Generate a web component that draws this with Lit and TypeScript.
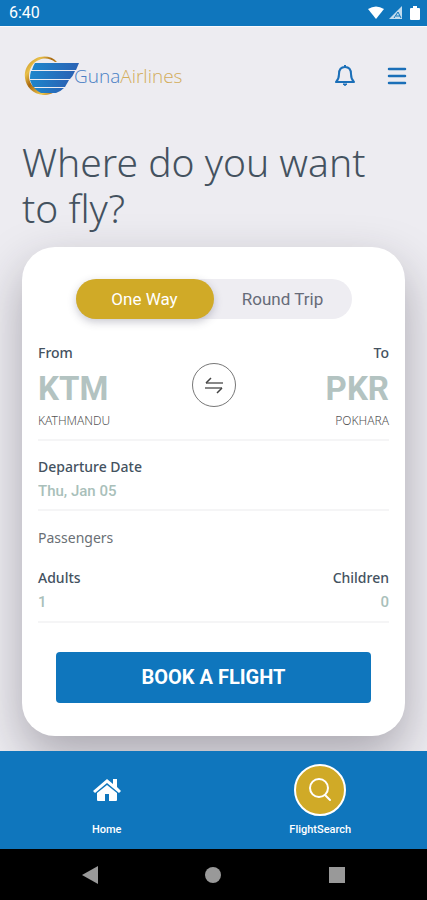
import { LitElement, html, css, svg } from "lit";
import { customElement, state } from "lit/decorators.js";
import { classMap } from "lit/directives/class-map.js";

@customElement("airline-logo")
class AirlineLogo extends LitElement {
  static styles = css`
    :host { display: flex; align-items: center; }
    .mark { width: 56px; height: 42px; flex: none; }
    .name {
      font: 300 19px/24px "Open Sans", sans-serif;
      color: #4a7fc4;
      margin-left: -6px;
    }
    .gold { color: #d3ad5b; }
  `;
  render() {
    return html`
      <svg class="mark" viewBox="0 0 56 42" aria-hidden="true">
        <defs>
          <linearGradient id="ring" x1="0" y1="0" x2="1" y2="1">
            <stop offset="0" stop-color="#b98318" />
            <stop offset=".25" stop-color="#e9c04a" />
            <stop offset=".45" stop-color="#a8680f" />
            <stop offset=".75" stop-color="#f0c84c" />
            <stop offset="1" stop-color="#8d4a12" />
          </linearGradient>
          <linearGradient id="wing" x1="0" y1="0" x2="1" y2="0">
            <stop offset="0" stop-color="#1d86cc" />
            <stop offset="1" stop-color="#2a62b4" />
          </linearGradient>
        </defs>
        <path d="M33 7C28 1 18 0 11 4C3 8 0 16 1 23C2 32 9 39 19 40C25 40 30 38 33 35L31 34C27 37 20 37 15 35C8 32 5 27 5 21C5 14 9 7 15 5C21 2 27 4 31 7Z" fill="url(#ring)" />
        <path d="M11 8H55L52 15H8Q9 11 11 8Z" fill="url(#wing)" />
        <path d="M7 16H51Q49 21 46 24H6Q6 19 7 16Z" fill="url(#wing)" />
        <path d="M6 25H45L41 32H9Q7 28 6 25Z" fill="url(#wing)" />
        <path d="M10 33H40Q36 37 32 38H17Q13 36 10 33Z" fill="url(#wing)" />
      </svg>
      <span class="name">Guna<span class="gold">Airlines</span></span>
    `;
  }
}

const wifi = svg`<path d="M0 3Q8-2 16 3L8 13Z" fill="#fff"/>`;
const signal = svg`<path d="M13 0V13H0Z" fill="#fff" opacity=".75"/><path d="M5 12L9 6L12 12M7 10H11" fill="none" stroke="#0f76bd"/>`;
const battery = svg`<path d="M3 0H7V2H9Q10 2 10 3V13Q10 14 9 14H1Q0 14 0 13V3Q0 2 1 2H3Z" fill="#fff"/>`;

@customElement("app-root")
class AppRoot extends LitElement {
  @state() private trip = "one";
  @state() private origin = { code: "KTM", city: "KATHMANDU" };
  @state() private target = { code: "PKR", city: "POKHARA" };

  static styles = css`
    :host {
      display: flex;
      flex-direction: column;
      min-height: 100vh;
      background: #edecf1;
      color: #44525f;
      font-family: Roboto, sans-serif;
    }
    * { box-sizing: border-box; }
    button, input { font: inherit; color: inherit; border: 0; padding: 0; margin: 0; background: none; }
    button { cursor: pointer; }
    svg { display: block; }

    .status {
      display: flex;
      align-items: center;
      gap: 5px;
      height: 27px;
      padding: 0 7px 0 9px;
      background: #0f76bd;
      border-bottom: 1px solid #fafafd;
      color: #fff;
      font-size: 16px;
      line-height: 28px;
    }
    .time { margin-right: auto; }

    .top {
      display: flex;
      align-items: center;
      gap: 32px;
      padding: 28px 20px 0 24px;
    }
    .top airline-logo { margin-right: auto; }

    main { flex: 1; display: flex; flex-direction: column; padding: 42px 22px 15px; overflow: hidden; }
    h1 {
      margin: 0 0 16px;
      font: 300 39px/46px "Noto Sans", sans-serif;
    }
    .card {
      flex: 1;
      padding: 32px 16px 33px;
      border-radius: 33px;
      background: #fff;
      box-shadow: 0 20px 48px rgba(40, 36, 50, .34);
    }
    .trips {
      display: flex;
      width: 276px;
      max-width: 100%;
      margin: 0 auto 24px;
      border-radius: 20px;
      background: #eeedf2;
    }
    .trip {
      flex: 1;
      border-radius: 20px;
      font-size: 17px;
      line-height: 40px;
      color: #666b78;
    }
    .trip.on { background: #d0aa27; color: #fff; box-shadow: 0 3px 8px rgba(60, 60, 90, .28); }

    .row { display: flex; justify-content: space-between; align-items: center; border-bottom: 2px solid #f5f5f6; }
    .end { text-align: right; }
    .route { padding-bottom: 12px; }
    .place { flex: 1; }
    .label {
      display: block;
      font: 500 14px/20px "Noto Sans", sans-serif;
      color: #44525f;
    }
    .code { display: block; font-weight: 700; font-size: 33px; line-height: 52px; color: #b3c3c1; }
    .city { display: block; font: 300 12px/12px "Noto Sans", sans-serif; color: #555; }
    .swap {
      flex: none;
      display: grid;
      place-items: center;
      width: 44px;
      height: 44px;
      border: 1px solid #777;
      border-radius: 50%;
    }
    .field { flex: 1; min-width: 0; }
    .value { display: block; width: 100%; height: 28px; font-weight: 500; font-size: 15px; line-height: 28px; color: #a9bfba; }
    .date { padding: 16px 0 4px; }
    .people { padding-bottom: 5px; }
    h2 { margin: 17px 0 20px; font: 400 14px/20px "Noto Sans", sans-serif; color: #6a6f75; }
    .book {
      display: block;
      width: calc(100% - 36px);
      margin: 29px auto 0;
      border-radius: 4px;
      background: #0f76bd;
      color: #fff;
      font-weight: 700;
      font-size: 20px;
      line-height: 51px;
    }

    .tabs { display: flex; height: 98px; background: #0f76bd; }
    .tab {
      flex: 1;
      display: flex;
      flex-direction: column;
      align-items: center;
      gap: 4px;
      padding-top: 13px;
      color: #fff;
      text-decoration: none;
      font-weight: 500;
      font-size: 11px;
      line-height: 20px;
    }
    .bubble { display: grid; place-items: center; width: 52px; height: 52px; border-radius: 50%; }
    .bubble.on { background: #d0aa27; border: 2px solid #fff; }
    .system { display: flex; justify-content: space-around; align-items: center; height: 51px; padding: 0 28px; background: #000; }
  `;

  private swap() {
    [this.origin, this.target] = [this.target, this.origin];
  }

  private tripButton(id: string, text: string) {
    return html`<button
      class=${classMap({ trip: true, on: this.trip === id })}
      aria-pressed=${this.trip === id ? "true" : "false"}
      @click=${() => (this.trip = id)}
    >${text}</button>`;
  }

  render() {
    return html`
      <div class="status">
        <span class="time">6:40</span>
        <svg width="16" height="14" viewBox="0 0 16 14">${wifi}</svg>
        <svg width="14" height="14" viewBox="0 0 14 14">${signal}</svg>
        <svg width="12" height="14" viewBox="-2 0 12 14">${battery}</svg>
      </div>
      <header class="top">
        <airline-logo></airline-logo>
        <button aria-label="Notifications">
          <svg width="20" height="22" viewBox="0 0 20 22" fill="none" stroke="#1b6fb8" stroke-width="2" stroke-linejoin="round">
            <path d="M10 0V2M10 2C6 2 4 5 4 9C4 13 3 15 1 17H19C17 15 16 13 16 9C16 5 14 2 10 2Z" />
            <path d="M8 19Q10 22 12 19Z" fill="#1b6fb8" stroke-width="1" />
          </svg>
        </button>
        <button aria-label="Menu">
          <svg width="20" height="18" viewBox="0 0 20 18" stroke="#1b6fb8" stroke-width="2.5" stroke-linecap="round">
            <path d="M2 2H18M2 9H18M2 16H18" />
          </svg>
        </button>
      </header>
      <main>
        <h1>Where do you want to fly?</h1>
        <section class="card">
          <div class="trips" role="group" aria-label="Trip type">
            ${this.tripButton("one", "One Way")}${this.tripButton("round", "Round Trip")}
          </div>
          <div class="row route">
            <div class="place">
              <span class="label">From</span>
              <span class="code">${this.origin.code}</span>
              <span class="city">${this.origin.city}</span>
            </div>
            <button class="swap" aria-label="Swap airports" @click=${this.swap}>
              <svg width="20" height="20" viewBox="0 0 20 20" fill="none">
                <path d="M2 8H19M1 13H18" stroke="#888" stroke-width="2" />
                <path d="M2 8L7 3M18 13L13 18" stroke="#444" stroke-width="1.5" />
              </svg>
            </button>
            <div class="place end">
              <span class="label">To</span>
              <span class="code">${this.target.code}</span>
              <span class="city">${this.target.city}</span>
            </div>
          </div>
          <div class="row date">
            <div class="field">
              <label class="label" for="date">Departure Date</label>
              <input class="value" id="date" value="Thu, Jan 05" />
            </div>
          </div>
          <h2>Passengers</h2>
          <div class="row people">
            <div class="field">
              <label class="label" for="adults">Adults</label>
              <input class="value" id="adults" inputmode="numeric" value="1" />
            </div>
            <div class="field end">
              <label class="label" for="children">Children</label>
              <input class="value end" id="children" inputmode="numeric" value="0" />
            </div>
          </div>
          <button class="book">BOOK A FLIGHT</button>
        </section>
      </main>
      <nav class="tabs">
        <a class="tab" href="#home">
          <span class="bubble">
            <svg width="28" height="24" viewBox="0 0 28 24" fill="#fff">
              <path d="M14 1L0 13L2 15L14 5L26 15L28 13L24 9V1H20V6Z" />
              <path d="M14 7L4 15V22Q4 23 5 23H12V16H16V23H23Q24 23 24 22V15Z" />
            </svg>
          </span>
          Home
        </a>
        <a class="tab" href="#search" aria-current="page">
          <span class="bubble on">
            <svg width="24" height="24" viewBox="0 0 24 24" fill="none" stroke="#fff" stroke-width="2" stroke-linecap="round">
              <circle cx="11" cy="10" r="9" /><path d="M17 17L22 22" />
            </svg>
          </span>
          FlightSearch
        </a>
      </nav>
      <div class="system">
        <button aria-label="Back"><svg width="18" height="20" viewBox="0 0 18 20"><path d="M17 1V19L1 10Z" fill="#999" /></svg></button>
        <button aria-label="Home screen"><svg width="18" height="18" viewBox="0 0 18 18"><circle cx="9" cy="9" r="8" fill="#999" /></svg></button>
        <button aria-label="Recent apps"><svg width="18" height="18" viewBox="0 0 18 18"><path d="M1 1H17V17H1Z" fill="#999" /></svg></button>
      </div>
    `;
  }
}
